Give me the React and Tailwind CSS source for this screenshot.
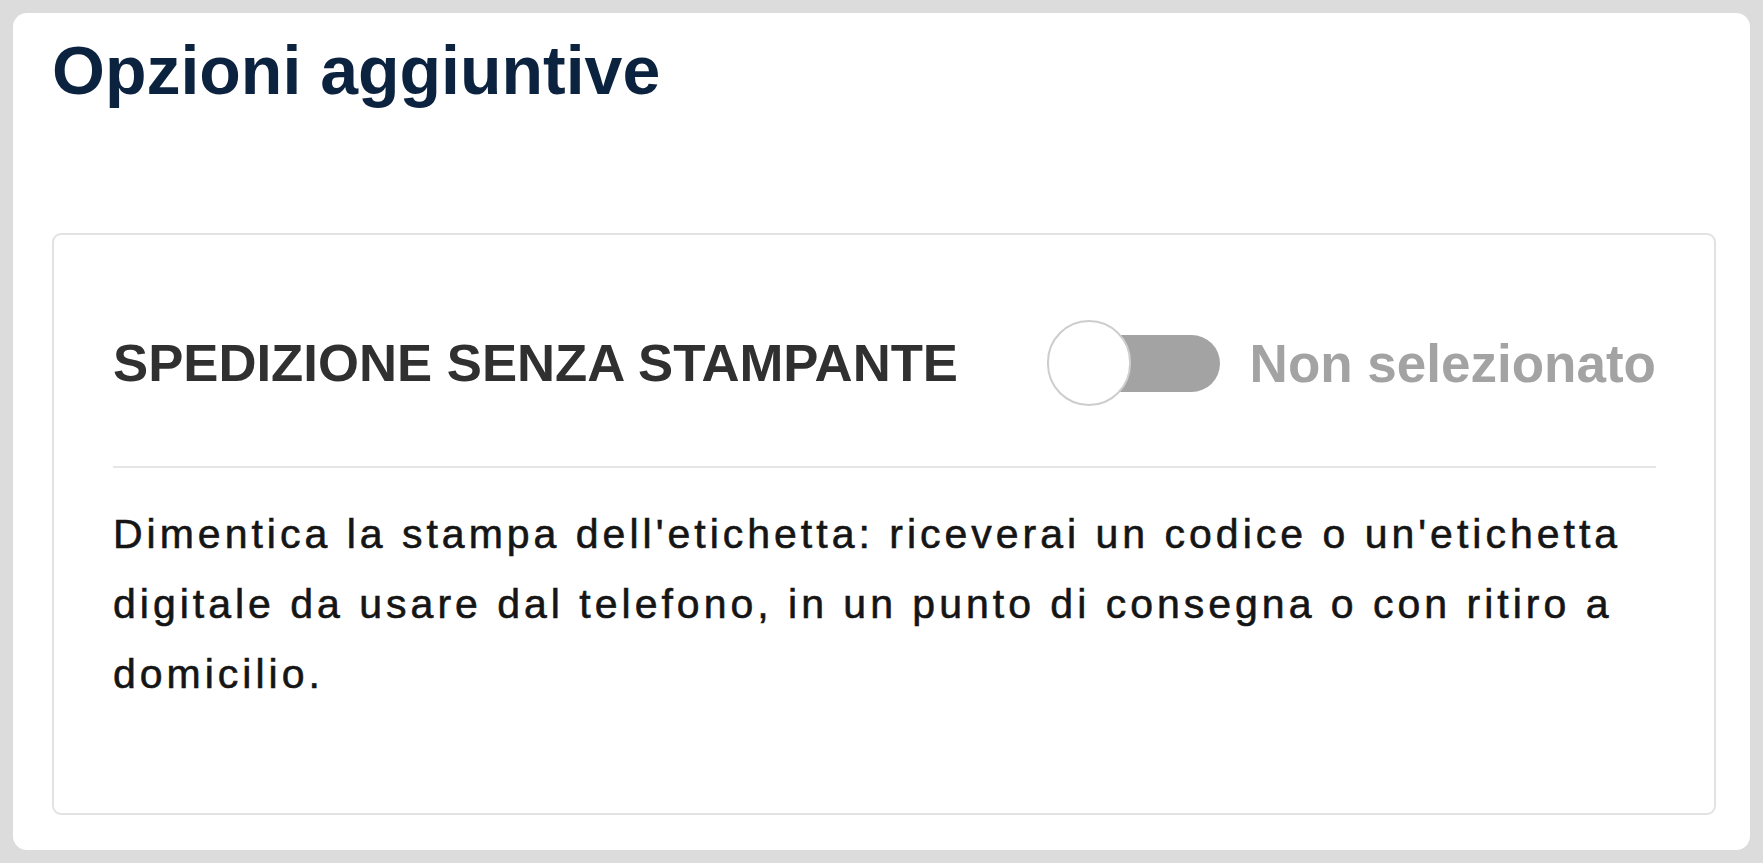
export default function App() {
  return (
    <div
      className="w-full h-[863px] bg-[#dcdcdc] p-[13px]"
      style={{ fontFamily: '"Liberation Sans", Arial, sans-serif' }}
    >
      <div className="h-full bg-white rounded-[14px] pl-[39px] pr-[34px] pt-[23px]">
        <h1 className="text-[68px] leading-none font-bold text-[#0c2340]">
          Opzioni aggiuntive
        </h1>
        <div className="mt-[129px] border-2 border-[#e2e2e2] rounded-[9px] pt-[85px] pb-[104px] pl-[59px] pr-[58px]">
          <div className="flex items-center justify-between h-[86px]">
            <span className="text-[52.7px] leading-none font-bold text-[#303030]">
              SPEDIZIONE SENZA STAMPANTE
            </span>
            <div className="flex items-center gap-[30px]">
              <div className="relative w-[173px] h-[86px]">
                <div className="absolute left-[4px] right-0 top-[15px] h-[57px] rounded-full bg-[#a3a3a3]" />
                <div className="absolute left-0 top-0 w-[84px] h-[86px] rounded-full bg-white border-2 border-[#cdcdcd]" />
              </div>
              <span className="text-[53px] leading-none font-bold text-[#a3a3a3]">
                Non selezionato
              </span>
            </div>
          </div>
          <div className="mt-[60px] h-[2px] bg-[#e6e6e6]" />
          <p className="mt-[31px] text-[41px] leading-[70px] tracking-[4px] text-[#151515] [-webkit-text-stroke:0.6px_#151515]">
            Dimentica la stampa dell'etichetta: riceverai un codice o un'etichetta digitale da usare dal telefono, in un punto di consegna o con ritiro a domicilio.
          </p>
        </div>
      </div>
    </div>
  );
}
